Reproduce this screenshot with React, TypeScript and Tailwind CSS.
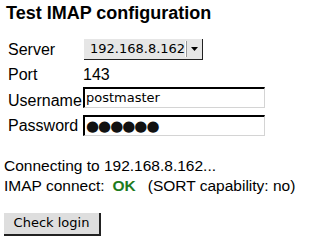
export default function App() {
  return (
    <div className="w-[312px] h-[241px] bg-white text-black font-['Liberation_Sans',Arial,sans-serif] relative overflow-hidden">
      <div className="pl-[6px] pt-[3px] text-[18px] leading-[20px] font-bold">Test IMAP configuration</div>

      <div className="mt-[14px] pl-[8px] text-[16px]">
        <div className="flex h-[25px] items-start">
          <div className="w-[76px] leading-[25px]">Server</div>
          <div className="mt-[2px] flex h-[21px] w-[119px] bg-[#e6e6e6] border-r border-b border-[#222] font-['DejaVu_Sans',sans-serif] text-[13px]">
            <div className="flex-1 pl-[6px] leading-[20px]">192.168.8.162</div>
            <div className="w-px bg-white my-[2px]" />
            <div className="w-px bg-[#999] my-[2px]" />
            <div className="w-[16px] flex items-center justify-center">
              <svg width="7" height="4" viewBox="0 0 7 4">
                <path d="M0 0 H7 L3.5 4 Z" fill="#000" />
              </svg>
            </div>
          </div>
        </div>
        <div className="flex h-[26px]">
          <div className="w-[76px] leading-[25px]">Port</div>
          <div className="leading-[25px] -ml-px">143</div>
        </div>
        <div className="flex h-[25px] items-start">
          <div className="w-[75px] leading-[25px]">Username</div>
          <div className="-mt-px h-[21px] w-[182px] border-t-2 border-l-2 border-t-black border-l-black border-r border-b border-r-[#d4d4d4] border-b-[#d4d4d4] font-['DejaVu_Sans',sans-serif] text-[13px] leading-[18px] pl-[1px]">
            postmaster
          </div>
        </div>
        <div className="flex h-[25px] items-start">
          <div className="w-[75px] leading-[25px]">Password</div>
          <div className="mt-[2px] h-[21px] w-[182px] border-t-2 border-l-2 border-t-black border-l-black border-r border-b border-r-[#d4d4d4] border-b-[#d4d4d4] font-['DejaVu_Sans',sans-serif] text-[15px] leading-[18px] pl-[1px] text-[#111] tracking-[-1px]">
            ●●●●●●
          </div>
        </div>
      </div>

      <div className="mt-[18px] pl-[4px] text-[15.5px] leading-[20px]">
        <div>Connecting to 192.168.8.162...</div>
        <div className="flex">
          <span>IMAP connect:</span>
          <span className="ml-[8px] font-bold text-[#1e7a1e]">OK</span>
          <span className="ml-[12px]">(SORT capability: no)</span>
        </div>
      </div>

      <div className="mt-[14px] pl-[4px]">
        <button className="h-[23px] w-[97px] bg-[#dedede] border-r-2 border-b-2 border-[#222] font-['DejaVu_Sans',sans-serif] text-[13px] leading-[20px] text-black">
          Check login
        </button>
      </div>
    </div>
  );
}
